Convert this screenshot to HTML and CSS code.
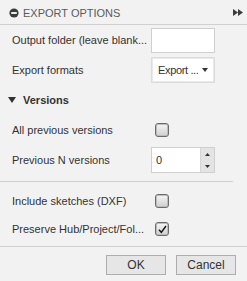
FILE: index.html
```html
<!DOCTYPE html>
<html>
<head>
<meta charset="utf-8">
<link rel="stylesheet" href="styles.css">
</head>
<body>
<div class="panel">
  <div class="header">
    <svg class="hicon" width="10" height="10" viewBox="0 0 10 10"><circle cx="5" cy="5" r="4.6" fill="#3c3c3c"/><rect x="2.2" y="4.1" width="5.6" height="1.8" fill="#fff"/></svg>
    <span class="htitle">EXPORT OPTIONS</span>
    <svg class="harrow" width="10" height="7" viewBox="0 0 10 7"><path d="M0 0 L5 3.5 L0 7Z M5 0 L10 3.5 L5 7Z" fill="#3c3c3c"/></svg>
  </div>
  <div class="body">
    <div class="row r30">
      <span class="label">Output folder (leave blank...</span>
      <div class="textbox"></div>
    </div>
    <div class="row r30">
      <span class="label">Export formats</span>
      <div class="select"><span class="seltext">Export ...</span><svg width="6" height="4" viewBox="0 0 6 4"><path d="M0 0H6L3 4Z" fill="#333"/></svg></div>
    </div>
    <div class="section r30">
      <svg width="8" height="6" viewBox="0 0 8 6"><path d="M0 0H8L4 6Z" fill="#333"/></svg>
      <span>Versions</span>
    </div>
    <div class="row r30">
      <span class="label">All previous versions</span>
      <div class="cbwrap"><span class="checkbox"></span></div>
    </div>
    <div class="row r30">
      <span class="label">Previous N versions</span>
      <div class="spinner">
        <span class="spinval">0</span>
        <div class="spinbtns">
          <span class="sb"><svg width="5" height="3" viewBox="0 0 5 3"><path d="M0 3H5L2.5 0Z" fill="#333"/></svg></span>
          <span class="sb"><svg width="5" height="3" viewBox="0 0 5 3"><path d="M0 0H5L2.5 3Z" fill="#333"/></svg></span>
        </div>
      </div>
    </div>
    <div class="sep"></div>
    <div class="row r28 first">
      <span class="label">Include sketches (DXF)</span>
      <div class="cbwrap"><span class="checkbox"></span></div>
    </div>
    <div class="row r28">
      <span class="label">Preserve Hub/Project/Fol...</span>
      <div class="cbwrap"><span class="checkbox"><svg width="11" height="11" viewBox="0 0 11 11"><path d="M2 5.8 L4.3 8.3 L9 2" fill="none" stroke="#111" stroke-width="1.4"/></svg></span></div>
    </div>
  </div>
  <div class="footer">
    <button class="btn">OK</button>
    <button class="btn">Cancel</button>
  </div>
</div>
</body>
</html>
```
FILE: styles.css
```css
html, body {
  margin: 0;
  padding: 0;
  background: #f2f2f2;
}
body {
  width: 247px;
  height: 281px;
  overflow: hidden;
  font-family: "Liberation Sans", Arial, sans-serif;
  font-size: 11px;
  color: #333;
}
.panel {
  display: flex;
  flex-direction: column;
}
.header {
  height: 24px;
  border-bottom: 1px solid #d0d0d0;
  display: flex;
  align-items: center;
  padding-left: 9px;
  padding-right: 4px;
}
.hicon { margin-right: 4px; margin-top: 1px; }
.htitle {
  color: #5a5a5a;
  font-size: 11px;
  flex: 1;
  margin-top: 1px;
}
.harrow { margin-top: 1px; }
.body {
  display: flex;
  flex-direction: column;
}
.row {
  display: flex;
  align-items: center;
  padding-left: 12px;
}
.r30 { height: 30px; }
.r28 { height: 28px; }
.first { margin-top: 5px; }
.label {
  width: 139px;
  flex: none;
  white-space: nowrap;
  overflow: hidden;
  color: #333;
}
.textbox {
  width: 62px;
  height: 23px;
  background: #fff;
  border: 1px solid #cfcfcf;
}
.select {
  width: 56px;
  height: 24px;
  background: #fff;
  border: 1px solid #dcdcdc;
  box-shadow: inset 0 0 0 1px #e9e9e9;
  display: flex;
  align-items: center;
  padding-left: 6px;
  white-space: nowrap;
}
.seltext { flex: 1; white-space: nowrap; letter-spacing: -0.35px; }
.select svg { margin-right: 6px; flex: none; }
.section {
  display: flex;
  align-items: center;
  padding-left: 8px;
  font-weight: bold;
  color: #333;
}
.section svg { margin-right: 7px; }
.cbwrap {
  width: 64px;
  display: flex;
  padding-left: 4px;
}
.checkbox {
  width: 12px;
  height: 12px;
  border: 1px solid #6b6b6b;
  border-radius: 3px;
  background: linear-gradient(to bottom, #f6f6f6, #cfcfcf);
  box-shadow: inset 0 0 0 1px #bdbdbd;
  display: flex;
  align-items: center;
  justify-content: center;
}
.spinner {
  width: 62px;
  height: 24px;
  border: 1px solid #cfcfcf;
  background: #fff;
  display: flex;
}
.spinval {
  flex: 1;
  padding-left: 4px;
  display: flex;
  align-items: center;
}
.spinbtns {
  width: 13px;
  display: flex;
  flex-direction: column;
  background: #e4e4e4;
  border-left: 1px solid #d6d6d6;
}
.sb {
  flex: 1;
  display: flex;
  align-items: center;
  justify-content: center;
}
.sep {
  width: 233px;
  height: 1px;
  background: #cfcfcf;
  margin-top: 6px;
}
.footer {
  margin-top: 3px;
  border-top: 1px solid #cfcfcf;
  display: flex;
  justify-content: flex-end;
  gap: 10px;
  padding: 8px 11px 0 0;
}
.btn {
  width: 60px;
  height: 20px;
  background: #e6e6e6;
  border: 1px solid #adadad;
  border-radius: 0;
  font-family: "Liberation Sans", Arial, sans-serif;
  font-size: 12px;
  color: #333;
  padding: 0;
}
```
